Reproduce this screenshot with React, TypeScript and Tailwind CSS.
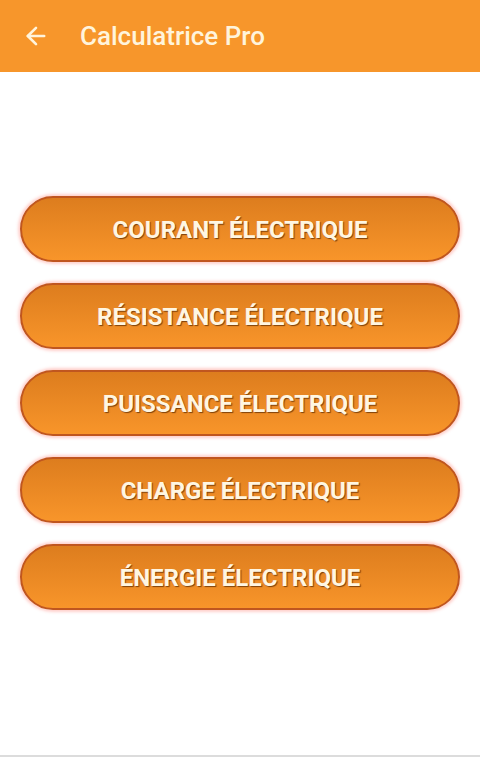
import { ArrowLeft } from "lucide-react";

const items = [
  "COURANT ÉLECTRIQUE",
  "RÉSISTANCE ÉLECTRIQUE",
  "PUISSANCE ÉLECTRIQUE",
  "CHARGE ÉLECTRIQUE",
  "ÉNERGIE ÉLECTRIQUE",
];

export default function App() {
  return (
    <div
      className="w-[480px] h-[757px] bg-white flex flex-col overflow-hidden"
      style={{ fontFamily: "Roboto, 'Liberation Sans', sans-serif" }}
    >
      <header className="h-[72px] shrink-0 bg-[#f7962b] flex items-center pl-[22px]">
        <ArrowLeft className="w-[28px] h-[28px] text-[#fff4dc]" strokeWidth={2.25} />
        <h1 className="ml-[30px] text-[26px] font-medium text-[#fff4dc]">
          Calculatrice Pro
        </h1>
      </header>

      <main className="flex-1 flex flex-col gap-[21px] px-[20px] pt-[124px]">
        {items.map((label) => (
          <button
            key={label}
            className="h-[66px] w-full rounded-full border-2 border-[#c0561f] bg-gradient-to-b from-[#dd7d1e] to-[#f8952a] shadow-[0_0_3px_2px_rgba(255,120,110,0.35)] flex items-center justify-center pt-[2px] text-[24px] font-bold text-[#fff6e2] [text-shadow:1px_1px_1px_rgba(90,40,0,0.75)]"
          >
            {label}
          </button>
        ))}
      </main>

      <div className="h-[2px] shrink-0 bg-[#dcdcdc]" />
    </div>
  );
}
